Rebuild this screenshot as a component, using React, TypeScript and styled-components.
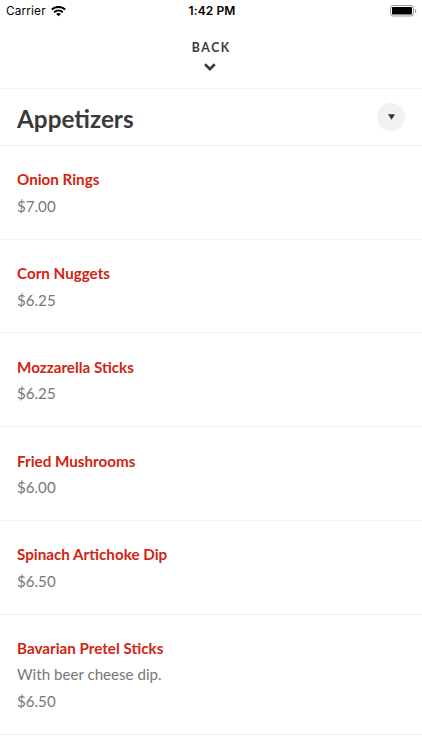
import React from "react";
import styled, { createGlobalStyle } from "styled-components";

const GlobalStyle = createGlobalStyle`
  *, *::before, *::after { box-sizing: border-box; }
  body { margin: 0; background: #fff; font-family: Lato, sans-serif; }
`;

const Screen = styled.main`
  width: 422px;
  height: 750px;
  overflow: hidden;
  background: #fff;
`;

const StatusBar = styled.div`
  display: grid;
  grid-template-columns: 1fr auto 1fr;
  align-items: center;
  height: 22px;
  padding: 0 5px 0 6px;
  font: 400 11.8px/22px Inter, sans-serif;
  color: #000;
`;

const Carrier = styled.div`
  display: flex;
  align-items: center;
  gap: 5px;
  letter-spacing: 0.15px;
`;

const Clock = styled.div`
  padding-left: 1px;
  font-weight: 600;
  font-size: 12px;
  letter-spacing: 0.1px;
`;

const Battery = styled.svg`
  justify-self: end;
`;

const BackButton = styled.button`
  display: flex;
  flex-direction: column;
  align-items: center;
  width: 100%;
  height: 67px;
  padding: 16px 1px 0 0;
  border: 0;
  border-bottom: 1px solid #f0f0f0;
  background: none;
  font: 700 12.7px/18px Lato, sans-serif;
  letter-spacing: 1.7px;
  color: #383838;
`;

const BackLabel = styled.span`
  padding-left: 1px;
  transform: scaleX(0.96);
`;

const Chevron = styled.svg`
  margin-top: 7px;
`;

const CategoryHeader = styled.header`
  display: flex;
  align-items: center;
  justify-content: space-between;
  height: 57px;
  padding: 0 17px;
  border-bottom: 1px solid #f0f0f0;
`;

const CategoryTitle = styled.h1`
  margin: 0;
  padding-top: 2px;
  font: 700 25.4px/30px Lato, sans-serif;
  color: #3a3a3a;
  transform: scaleX(0.957);
  transform-origin: left;
`;

const ToggleButton = styled.button`
  display: grid;
  place-items: center;
  width: 28px;
  height: 28px;
  padding: 0;
  border: 0;
  border-radius: 50%;
  background: #f2f2f2;
`;

const MenuList = styled.ul`
  margin: 0;
  padding: 0;
  list-style: none;
`;

const MenuItem = styled.li`
  padding: 20.4px 17px 19.5px;
  border-bottom: 1px solid #f0f0f0;
  font-size: 16px;
  line-height: 26.4px;
`;

const ItemName = styled.h2`
  margin: 0;
  font-size: 16px;
  font-weight: 700;
  line-height: inherit;
  color: #cf2512;
  transform: scaleX(0.95);
  transform-origin: left;
`;

const ItemText = styled.p`
  margin: 0;
  color: #777;
  transform: scaleX(0.945);
  transform-origin: left;
`;

const items = [
  { name: "Onion Rings", price: "$7.00" },
  { name: "Corn Nuggets", price: "$6.25" },
  { name: "Mozzarella Sticks", price: "$6.25" },
  { name: "Fried Mushrooms", price: "$6.00" },
  { name: "Spinach Artichoke Dip", price: "$6.50" },
  { name: "Bavarian Pretel Sticks", description: "With beer cheese dip.", price: "$6.50" },
];

export default function App() {
  return (
    <Screen>
      <GlobalStyle />
      <StatusBar>
        <Carrier>
          Carrier
          <svg width="15" height="11" viewBox="0 0 15 11" fill="none" stroke="#000" strokeWidth="2">
            <path d="M.8 3.6C4.6 0 10.4 0 14.2 3.6M3.2 6.2c2.5-2.3 6.1-2.3 8.6 0" />
            <path d="M7.5 10.3 5.1 8c1.3-1.2 3.5-1.2 4.8 0z" fill="#000" stroke="none" />
          </svg>
        </Carrier>
        <Clock>1:42 PM</Clock>
        <Battery width="27" height="12" viewBox="0 0 27 12">
          <rect x=".5" y=".5" width="23" height="10.5" rx="2.5" fill="none" stroke="#999" />
          <rect x="2" y="2" width="20" height="7.5" rx=".8" />
          <path d="M25 4v4c1.8-.7 1.8-3.3 0-4z" fill="#999" />
        </Battery>
      </StatusBar>
      <BackButton>
        <BackLabel>BACK</BackLabel>
        <Chevron width="13" height="8" viewBox="0 0 13 8" fill="none" stroke="#383838" strokeWidth="2.6">
          <path d="m1 1.3 4.9 4.8 4.9-4.8" />
        </Chevron>
      </BackButton>
      <CategoryHeader>
        <CategoryTitle>Appetizers</CategoryTitle>
        <ToggleButton aria-label="Toggle category">
          <svg width="7" height="6" viewBox="0 0 7 6"><path d="M0 .3h7L3.5 5.7z" fill="#333" /></svg>
        </ToggleButton>
      </CategoryHeader>
      <MenuList>
        {items.map((item) => (
          <MenuItem key={item.name}>
            <ItemName>{item.name}</ItemName>
            {item.description && <ItemText>{item.description}</ItemText>}
            <ItemText>{item.price}</ItemText>
          </MenuItem>
        ))}
      </MenuList>
    </Screen>
  );
}
